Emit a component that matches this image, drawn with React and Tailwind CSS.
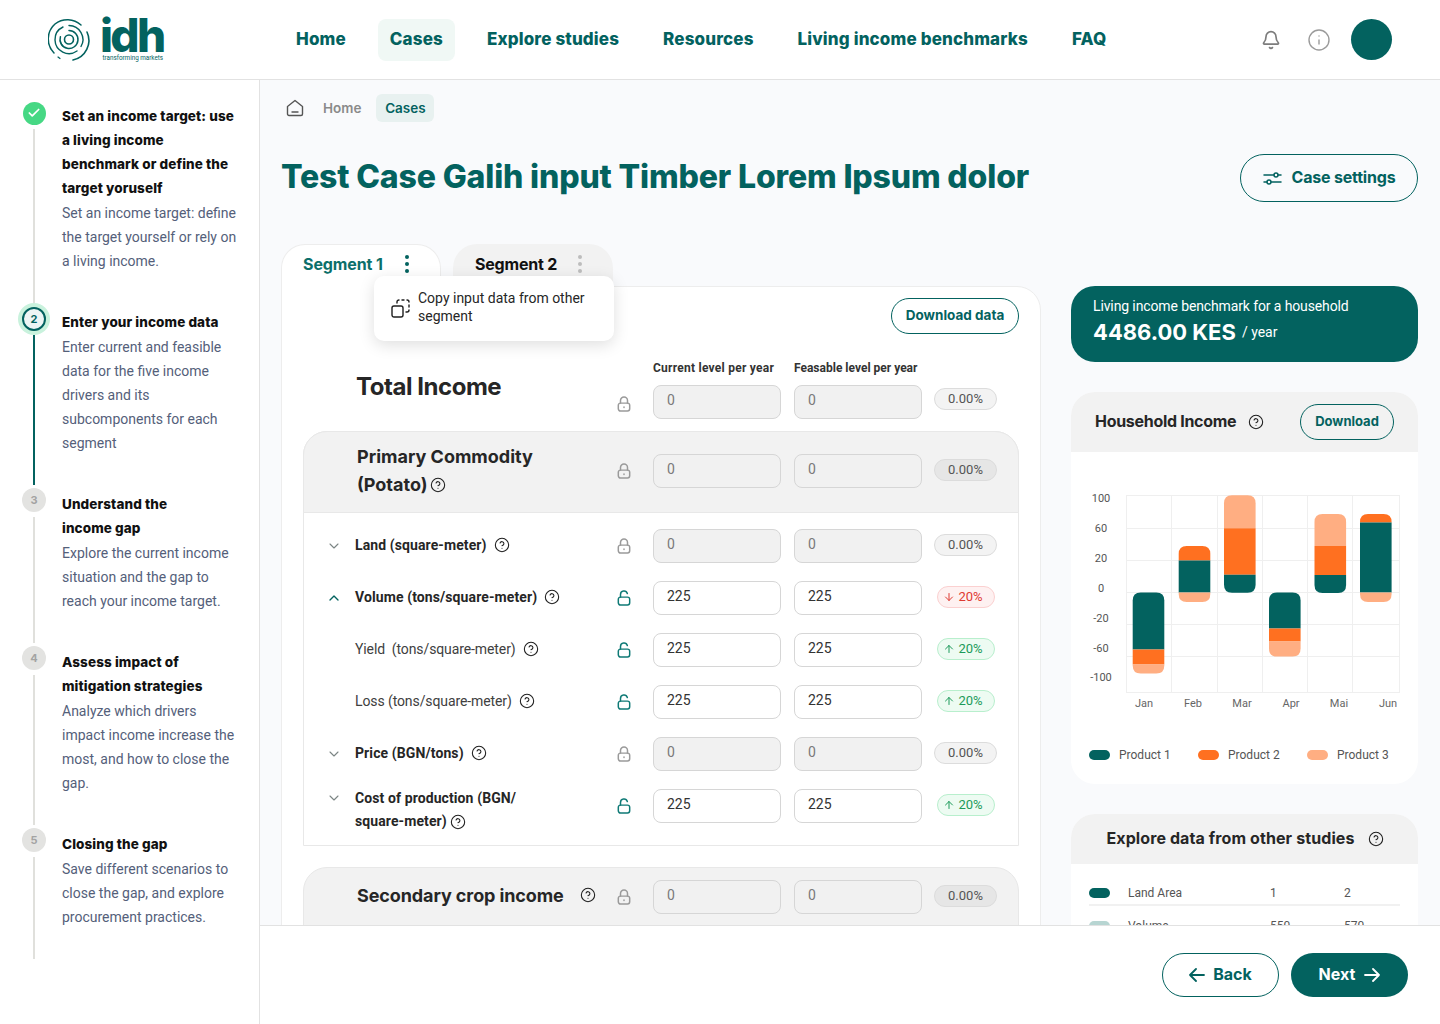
import { ArrowDown, ArrowUp, Bell, Check, ChevronDown, ChevronUp, CircleHelp, Info } from "lucide-react";

const navItems = [
  { label: "Home" },
  { label: "Cases", active: true },
  { label: "Explore studies" },
  { label: "Resources" },
  { label: "Living income benchmarks" },
  { label: "FAQ" },
];

const steps = [
  {
    status: "done",
    title: ["Set an income target: use", "a living income", "benchmark or define the", "target yoruself"],
    text: ["Set an income target: define", "the target yourself or rely on", "a living income."],
  },
  {
    status: "active",
    number: 2,
    title: ["Enter your income data"],
    text: ["Enter current and feasible", "data for the five income", "drivers and its", "subcomponents for each", "segment"],
  },
  {
    number: 3,
    title: ["Understand the", "income gap"],
    text: ["Explore the current income", "situation and the gap to", "reach your income target."],
  },
  {
    number: 4,
    title: ["Assess impact of", "mitigation strategies"],
    text: ["Analyze which drivers", "impact income increase the", "most, and how to close the", "gap."],
  },
  {
    number: 5,
    title: ["Closing the gap"],
    text: ["Save different scenarios to", "close the gap, and explore", "procurement practices."],
  },
];

const rows = [
  { label: "Land (square-meter)", chevron: "down", bold: true, value: "0", locked: true },
  { label: "Volume (tons/square-meter)", chevron: "up", bold: true, value: "225", change: "down" },
  { label: "Yield  (tons/square-meter)", value: "225", change: "up" },
  { label: "Loss (tons/square-meter)", value: "225", change: "up" },
  { label: "Price (BGN/tons)", chevron: "down", bold: true, value: "0", locked: true },
];

const bars = [
  {
    x: 1132.7,
    parts: [
      { y: 592.5, h: 57, color: "#03625f", round: "top" },
      { y: 649.5, h: 15, color: "#ff7020" },
      { y: 664.5, h: 9, color: "#ffae82", round: "bottom" },
    ],
  },
  {
    x: 1178.7,
    parts: [
      { y: 546, h: 14.5, color: "#ff7020", round: "top" },
      { y: 560.5, h: 32, color: "#03625f" },
      { y: 592.5, h: 9.5, color: "#ffae82", round: "bottom" },
    ],
  },
  {
    x: 1224,
    parts: [
      { y: 495.3, h: 33, color: "#ffae82", round: "top" },
      { y: 528.3, h: 46.5, color: "#ff7020" },
      { y: 574.8, h: 18, color: "#03625f", round: "bottom" },
    ],
  },
  {
    x: 1269,
    parts: [
      { y: 592.5, h: 36, color: "#03625f", round: "top" },
      { y: 628.5, h: 13, color: "#ff7020" },
      { y: 641.5, h: 15, color: "#ffae82", round: "bottom" },
    ],
  },
  {
    x: 1314.5,
    parts: [
      { y: 514, h: 32, color: "#ffae82", round: "top" },
      { y: 546, h: 29, color: "#ff7020" },
      { y: 575, h: 18, color: "#03625f", round: "bottom" },
    ],
  },
  {
    x: 1360,
    parts: [
      { y: 514, h: 8.5, color: "#ff7020", round: "top" },
      { y: 522.5, h: 70, color: "#03625f" },
      { y: 592.5, h: 9.5, color: "#ffae82", round: "bottom" },
    ],
  },
];

function barPath(x, part) {
  const w = 31.6;
  const r = 8;
  const { y, h, round } = part;
  if (round === "top") {
    return `M${x} ${y + h}V${y + r}Q${x} ${y} ${x + r} ${y}H${x + w - r}Q${x + w} ${y} ${x + w} ${y + r}V${y + h}Z`;
  }
  if (round === "bottom") {
    return `M${x} ${y}V${y + h - r}Q${x} ${y + h} ${x + r} ${y + h}H${x + w - r}Q${x + w} ${y + h} ${x + w} ${y + h - r}V${y}Z`;
  }
  return `M${x} ${y}H${x + w}V${y + h}H${x}Z`;
}

function Logo() {
  return (
    <div className="flex w-[284px] items-center pl-[48px]">
      <svg width="44" height="46" viewBox="0 0 44 46" fill="none" stroke="#03625f" strokeLinecap="round">
        <circle cx="21" cy="22.5" r="4.5" strokeWidth="1.6" />
        <path d="M21 13.5a9 9 0 1 1-8.6 6.3" strokeWidth="1.5" />
        <path d="M13 26a9.5 9.5 0 0 0 2 3" strokeWidth="1.2" />
        <path d="M21 8.5a14 14 0 0 1 12 21" strokeWidth="1.4" />
        <path d="M29 34a14 14 0 0 1-22-11 14 14 0 0 1 8-13" strokeWidth="1.4" />
        <path d="M33 8a20 20 0 0 0-26-1A20 20 0 0 0 6 36" strokeWidth="1.5" />
        <path d="M39 15a20 20 0 0 1-14 28" strokeWidth="1.6" />
        <path d="M10 40l2 1.5" strokeWidth="1.2" />
      </svg>
      <div className="ml-[8px] flex flex-col items-end">
        <span className="font-[Inter,sans-serif] text-[46px] leading-[36px] font-extrabold tracking-[-2.7px] text-[#03625f]">idh</span>
        <span className="mt-[2px] w-[61px] text-[6.3px] leading-[7px] whitespace-nowrap text-[#03625f]">transforming markets</span>
      </div>
    </div>
  );
}

function Header() {
  return (
    <header className="flex h-[80px] shrink-0 items-center border-b border-[#e2e2e2] bg-white pr-[48px]">
      <Logo />
      <nav className="flex items-center gap-[20px]">
        {navItems.map((item) => (
          <a
            key={item.label}
            className={`flex h-[42px] items-center rounded-[8px] px-[12px] font-[Inter,sans-serif] text-[17px] font-extrabold tracking-[0.15px] text-[#03625f] ${item.active ? "bg-[#f0f8f5]" : ""}`}
          >
            {item.label}
          </a>
        ))}
      </nav>
      <div className="ml-auto flex items-center">
        <Bell size={20} strokeWidth={2} className="text-[#7c7c7c]" />
        <Info size={24} strokeWidth={1.4} className="ml-[26px] text-[#9b9b9b]" />
        <div className="ml-[20px] h-[41px] w-[41px] rounded-full bg-[#03625f]"></div>
      </div>
    </header>
  );
}

function StepMarker({ step }) {
  if (step.status === "done") {
    return (
      <div className="flex h-[23px] w-[23px] items-center justify-center rounded-full bg-[#46d884]">
        <Check size={14} strokeWidth={3} className="text-white" />
      </div>
    );
  }
  if (step.status === "active") {
    return (
      <div className="flex h-[32px] w-[32px] items-center justify-center rounded-full bg-[#c9f2dd]">
        <div className="flex h-[24px] w-[24px] items-center justify-center rounded-full border-2 border-[#03625f] bg-[#edf5f4] font-[Inter,sans-serif] text-[11px] font-bold text-[#03625f]">
          {step.number}
        </div>
      </div>
    );
  }
  return (
    <div className="relative top-[-1px] flex h-[24px] w-[24px] items-center justify-center rounded-full bg-[#e3e3e1] font-[Inter,sans-serif] text-[11px] font-bold text-[#a3a3a3]">
      {step.number}
    </div>
  );
}

function Sidebar() {
  return (
    <aside className="w-[260px] shrink-0 border-r border-[#e2e2e2] bg-white pt-[24px]">
      {steps.map((step) => (
        <div key={step.number || step.status} className="flex pl-[18px]">
          <div className="mt-[-7px] mb-[7px] flex w-[32px] flex-col items-center">
            <div className="flex h-[32px] items-center justify-center">
              <StepMarker step={step} />
            </div>
            <div className={`w-[2px] flex-1 ${step.status === "active" ? "bg-[#03625f]" : "bg-[#e0e0dc]"}`}></div>
          </div>
          <div className="pb-[37px] pl-[12px] text-[14px] leading-[24px]">
            {step.title.map((line) => (
              <div key={line} className="font-[Inter,sans-serif] text-[13.5px] font-extrabold tracking-[0.1px] whitespace-nowrap text-[#111]">
                {line}
              </div>
            ))}
            <div className="mt-[1px]">
              {step.text.map((line) => (
                <div key={line} className="whitespace-nowrap text-[#54607a]">
                  {line}
                </div>
              ))}
            </div>
          </div>
        </div>
      ))}
    </aside>
  );
}

function HomeIcon() {
  return (
    <svg width="18" height="18" viewBox="0 0 18 18" fill="none" stroke="#555" strokeWidth="1.4" strokeLinejoin="round" strokeLinecap="round">
      <path d="M1.5 7.5 9 1.5l7.5 6v7.5a1.5 1.5 0 0 1-1.5 1.5H3A1.5 1.5 0 0 1 1.5 15z" />
      <path d="M6 13h6" />
    </svg>
  );
}

function SlidersIcon() {
  return (
    <svg width="19" height="15" viewBox="0 0 19 15" fill="none" stroke="#03625f" strokeWidth="1.5" strokeLinecap="round">
      <path d="M1 4h10M15 4h3M1 11h3M8 11h10" />
      <circle cx="13" cy="4" r="2" />
      <circle cx="6" cy="11" r="2" />
    </svg>
  );
}

function CopyIcon() {
  return (
    <svg width="19" height="19" viewBox="0 0 19 19" fill="none" stroke="#1f1f1f" strokeWidth="1.4" strokeLinecap="round" strokeLinejoin="round">
      <rect x="1" y="7" width="11" height="11" rx="2" />
      <path d="M6 4V3a2 2 0 0 1 2-2M11 1h2M16 1a2 2 0 0 1 2 2M18 6v2M18 11a2 2 0 0 1-2 2h-1" />
    </svg>
  );
}

function LockIcon({ open }) {
  const color = open ? "#0f7a76" : "#9a9a9a";
  return (
    <svg width="14" height="16" viewBox="0 0 16 18" fill="none" stroke={color} strokeWidth="1.7" strokeLinecap="round">
      <rect x="1.5" y="8" width="13" height="9" rx="2.5" />
      <path d={open ? "M4 8V5a4 4 0 0 1 7.8-1.2" : "M4 8V5a4 4 0 0 1 8 0v3"} />
      {!open && <path d="M8 12.5v.4" />}
    </svg>
  );
}

function Help() {
  return <CircleHelp size={16} strokeWidth={1.6} className="shrink-0 text-[#1f1f1f]" />;
}

function BackArrow() {
  return (
    <svg width="16" height="14" viewBox="0 0 16 14" fill="none" stroke="currentColor" strokeWidth="1.8" strokeLinecap="round" strokeLinejoin="round">
      <path d="M1 7h14M7 1 1 7l6 6" />
    </svg>
  );
}

function NextArrow() {
  return (
    <svg width="16" height="14" viewBox="0 0 16 14" fill="none" stroke="currentColor" strokeWidth="1.8" strokeLinecap="round" strokeLinejoin="round">
      <path d="M1 7h14M9 1l6 6-6 6" />
    </svg>
  );
}

function ValueInput({ value, locked }) {
  return (
    <div
      className={`flex h-[34px] w-[128px] items-center rounded-[8px] border pb-[4px] pl-[13px] text-[14px] ${
        locked ? "border-[#d6d6d6] bg-[#f1f1f1] text-[#7a7a7a]" : "border-[#d6d6d6] bg-white text-[#333]"
      }`}
    >
      {value}
    </div>
  );
}

function Chip({ change, shaded }) {
  if (change === "up") {
    return (
      <div className="flex h-[22px] w-[58px] items-center gap-[4px] rounded-full border border-[#b8efcd] bg-[#edfbf2] pl-[5px] text-[13px] text-[#1c9a5a]">
        <ArrowUp size={12} strokeWidth={2} />
        20%
      </div>
    );
  }
  if (change === "down") {
    return (
      <div className="flex h-[22px] w-[58px] items-center gap-[4px] rounded-full border border-[#fbd0d0] bg-[#fef1f1] pl-[5px] text-[13px] text-[#df3a32]">
        <ArrowDown size={12} strokeWidth={2} />
        20%
      </div>
    );
  }
  return (
    <div className={`flex h-[22px] w-[63px] items-center justify-center rounded-full border border-[#dcdcdc] text-[13px] text-[#555] ${shaded ? "bg-[#e6e6e6]" : "bg-[#f3f3f3]"}`}>
      0.00%
    </div>
  );
}

function Controls({ value, locked, change, shaded, total }) {
  return (
    <div className="flex shrink-0 items-center">
      <div className={`relative mr-[21px] flex w-[16px] justify-center ${total ? "top-[2px]" : "top-0"}`}>
        <LockIcon open={!locked} />
      </div>
      <ValueInput value={value} locked={locked} />
      <div className="ml-[13px]">
        <ValueInput value={value} locked={locked} />
      </div>
      <div className={`relative ml-[12px] flex w-[63px] justify-center ${total ? "top-[-3px]" : "top-[-1px]"}`}>
        <Chip change={change} shaded={shaded} />
      </div>
    </div>
  );
}

function IncomeRow({ row }) {
  return (
    <div className="flex h-[52px] items-center pr-[21px] pl-[22px]">
      <div className="w-[14px] shrink-0">
        {row.chevron === "down" && <ChevronDown size={16} strokeWidth={1.6} className="text-[#7c8584]" />}
        {row.chevron === "up" && <ChevronUp size={16} strokeWidth={2} className="text-[#03625f]" />}
      </div>
      <div className={`ml-[15px] flex flex-1 items-center gap-[7px] pb-[2px] text-[14px] whitespace-pre ${row.bold ? "font-bold tracking-[0.1px] text-[#262626]" : "tracking-[-0.1px] text-[#404040]"}`}>
        {row.label}
        <Help />
      </div>
      <Controls value={row.value} locked={row.locked} change={row.change} />
    </div>
  );
}

function SegmentTabs() {
  return (
    <div className="relative z-10 flex gap-[12px]">
      <div className="mb-[-1px] flex h-[43px] w-[160px] items-center rounded-t-[24px] border border-b-0 border-[#ededed] bg-white pb-[4px] pl-[21px] font-[Inter,sans-serif] text-[16px] font-bold tracking-[-0.1px] text-[#0c6f6a]">
        Segment 1
        <div className="ml-[22px] flex flex-col gap-[3px]">
          <span className="h-[4px] w-[4px] rounded-full bg-[#03625f]"></span>
          <span className="h-[4px] w-[4px] rounded-full bg-[#03625f]"></span>
          <span className="h-[4px] w-[4px] rounded-full bg-[#03625f]"></span>
        </div>
      </div>
      <div className="flex h-[42px] w-[160px] items-center rounded-t-[24px] bg-[#f2f2f2] pb-[2px] pl-[22px] font-[Inter,sans-serif] text-[16px] font-bold tracking-[-0.2px] text-[#111]">
        Segment 2
        <div className="ml-[21px] flex flex-col gap-[3px]">
          <span className="h-[4px] w-[4px] rounded-full bg-[#bdbdbd]"></span>
          <span className="h-[4px] w-[4px] rounded-full bg-[#bdbdbd]"></span>
          <span className="h-[4px] w-[4px] rounded-full bg-[#bdbdbd]"></span>
        </div>
      </div>
      <div className="absolute top-[32px] left-[93px] flex h-[65px] w-[240px] items-center rounded-[10px] bg-white pb-[4px] pl-[17px] text-[14px] leading-[18px] text-[#262626] shadow-[0_4px_16px_rgba(0,0,0,0.13)]">
        <div className="pt-[4px]">
          <CopyIcon />
        </div>
        <div className="ml-[8px]">
          Copy input data from other
          <br />
          segment
        </div>
      </div>
    </div>
  );
}

function IncomeCard() {
  return (
    <div className="w-[760px] shrink-0">
      <SegmentTabs />
      <div className="rounded-tr-[24px] border border-[#ededed] bg-white px-[21px] pt-[11px]">
        <div className="flex justify-end">
          <button className="h-[36px] w-[128px] rounded-full border border-[#03625f] pb-[2px] font-[Inter,sans-serif] text-[13.5px] font-bold text-[#03625f]">Download data</button>
        </div>
        <div className="mt-[26px] flex h-[16px] items-center pl-[350px] text-[12px] font-bold whitespace-nowrap text-[#333]">
          <div className="w-[141px] tracking-[0.25px]">Current level per year</div>
          <div>Feasable level per year</div>
        </div>
        <div className="mt-[9px] flex items-start pr-[22px] pl-[54px]">
          <h2 className="mt-[-13px] ml-[-1px] flex-1 font-[Inter,sans-serif] text-[24px] leading-[30px] font-bold tracking-[-0.45px] text-[#262626]">Total Income</h2>
          <Controls value="0" locked total />
        </div>
        <section className="mt-[12px] rounded-t-[24px] border border-[#e8e8e8]">
          <div className="-m-px flex h-[82px] items-center rounded-t-[24px] border border-[#e8e8e8] bg-[#f2f2f2] pr-[21px] pb-[2px] pl-[53px]">
            <div className="flex-1 font-[Inter,sans-serif] text-[18px] leading-[28px] font-bold text-[#262626]">
              Primary Commodity
              <div className="flex items-center gap-[3px]">
                (Potato)
                <Help />
              </div>
            </div>
            <Controls value="0" locked shaded />
          </div>
          <div className="pt-[8px] pb-[13px]">
            {rows.map((row) => (
              <IncomeRow key={row.label} row={row} />
            ))}
            <div className="flex h-[52px] items-center pr-[21px] pl-[22px]">
              <div className="mb-[16px] w-[14px] shrink-0">
                <ChevronDown size={16} strokeWidth={1.6} className="text-[#7c8584]" />
              </div>
              <div className="ml-[15px] flex-1 pt-[8px] text-[14px] leading-[23px] font-bold tracking-[0.1px] text-[#262626]">
                Cost of production (BGN/
                <div className="flex items-center gap-[3px]">
                  square-meter)
                  <Help />
                </div>
              </div>
              <Controls value="225" change="up" />
            </div>
          </div>
        </section>
        <section className="mt-[21px] h-[100px] rounded-t-[24px] border border-[#e8e8e8] bg-[#f2f2f2] pt-[12px]">
          <div className="flex items-center pr-[21px] pl-[53px]">
            <div className="flex flex-1 items-center gap-[16px] pb-[4px] font-[Inter,sans-serif] text-[18px] font-bold tracking-[-0.1px] text-[#262626]">
              Secondary crop income
              <Help />
            </div>
            <Controls value="0" locked shaded />
          </div>
        </section>
      </div>
    </div>
  );
}

function BarChart() {
  const gridY = [495.5, 528.5, 560.5, 592.5, 624.5, 656.5, 692.5];
  const gridX = [1126.5, 1171.5, 1217.5, 1262.5, 1307.5, 1352.5, 1399.5];
  const yLabels = [
    ["100", 498],
    ["60", 528],
    ["20", 558],
    ["0", 588],
    ["-20", 618],
    ["-60", 648],
    ["-100", 677],
  ];
  const xLabels = [
    ["Jan", 1144],
    ["Feb", 1193],
    ["Mar", 1242],
    ["Apr", 1291],
    ["Mai", 1339],
    ["Jun", 1388],
  ];
  return (
    <svg width="347" height="240" viewBox="1071 482 347 240" className="block">
      {gridY.map((y) => (
        <line key={y} x1="1126" x2="1400" y1={y} y2={y} stroke="#efefef" strokeWidth="1" />
      ))}
      {gridX.map((x) => (
        <line key={x} x1={x} x2={x} y1="495" y2="693" stroke="#efefef" strokeWidth="1" />
      ))}
      {bars.map((bar) =>
        bar.parts.map((part) => <path key={`${bar.x}-${part.y}`} d={barPath(bar.x, part)} fill={part.color} />),
      )}
      {yLabels.map(([label, y]) => (
        <text key={label} x="1101" y={y + 4} textAnchor="middle" fontSize="11" fill="#555">
          {label}
        </text>
      ))}
      {xLabels.map(([label, x]) => (
        <text key={label} x={x} y="707" textAnchor="middle" fontSize="11" fill="#666">
          {label}
        </text>
      ))}
    </svg>
  );
}

function LegendItem({ swatch, label }) {
  return (
    <div className="flex w-[109px] items-center gap-[9px] text-[12px] text-[#555]">
      <span className={`h-[10px] w-[21px] rounded-full ${swatch}`}></span>
      {label}
    </div>
  );
}

function SidePanel() {
  return (
    <div className="w-[347px] shrink-0 pt-[42px]">
      <div className="h-[76px] rounded-[24px] bg-[#03625f] pt-[12px] pl-[22px] text-white">
        <div className="text-[14px] leading-[17px] tracking-[-0.12px]">Living income benchmark for a household</div>
        <div className="mt-[3px] flex items-center gap-[6px]">
          <span className="font-[Inter,sans-serif] text-[22px] leading-[28px] font-bold">4486.00 KES</span>
          <span className="text-[14px]">/ year</span>
        </div>
      </div>
      <div className="mt-[30px] h-[392px] overflow-hidden rounded-[24px] bg-white">
        <div className="flex h-[60px] items-center bg-[#f2f2f2] pr-[24px] pl-[24px]">
          <span className="pb-[2px] font-[Inter,sans-serif] text-[16px] font-bold tracking-[-0.3px] text-[#262626]">Household Income</span>
          <div className="ml-[12px]">
            <Help />
          </div>
          <button className="ml-auto h-[36px] w-[94px] rounded-full border border-[#03625f] pb-[1px] font-[Inter,sans-serif] text-[13px] font-bold text-[#03625f]">Download</button>
        </div>
        <div className="pt-[30px]">
          <BarChart />
        </div>
        <div className="mt-[24px] flex pl-[18px]">
          <LegendItem swatch="bg-[#03625f]" label="Product 1" />
          <LegendItem swatch="bg-[#ff7020]" label="Product 2" />
          <LegendItem swatch="bg-[#ffae82]" label="Product 3" />
        </div>
      </div>
      <div className="mt-[30px] overflow-hidden rounded-t-[24px] bg-white">
        <div className="flex h-[50px] items-center justify-center gap-[13px] bg-[#f2f2f2] pl-[1px]">
          <span className="pb-[2px] font-[Inter,sans-serif] text-[16px] font-bold tracking-[0.1px] text-[#262626]">Explore data from other studies</span>
          <Help />
        </div>
        <div className="px-[18px] pt-[12px] text-[12px] text-[#555]">
          <div className="flex h-[30px] items-center border-b-2 border-[#f1f1f1] pt-[6px]">
            <span className="h-[10px] w-[21px] rounded-full bg-[#03625f]"></span>
            <span className="ml-[18px] w-[142px]">Land Area</span>
            <span className="w-[74px]">1</span>
            <span>2</span>
          </div>
          <div className="flex h-[40px] items-center">
            <span className="h-[10px] w-[21px] rounded-full bg-[#b7d5d2]"></span>
            <span className="ml-[18px] w-[142px]">Volume</span>
            <span className="w-[74px]">550</span>
            <span>570</span>
          </div>
        </div>
      </div>
    </div>
  );
}

function FooterBar() {
  return (
    <div className="absolute right-0 bottom-0 left-0 z-20 flex h-[99px] items-start justify-end gap-[12px] border-t border-[#e2e2e2] bg-white pt-[27px] pr-[32px]">
      <button className="flex h-[44px] w-[117px] items-center justify-center gap-[8px] rounded-full border border-[#03625f] font-[Inter,sans-serif] text-[16px] font-bold text-[#03625f]">
        <BackArrow />
        <span className="pb-[2px]">Back</span>
      </button>
      <button className="flex h-[44px] w-[117px] items-center justify-center gap-[9px] rounded-full bg-[#03625f] font-[Inter,sans-serif] text-[16px] font-bold text-white">
        <span className="pb-[2px]">Next</span>
        <NextArrow />
      </button>
    </div>
  );
}

export default function App() {
  return (
    <div className="flex h-[1024px] w-[1440px] flex-col overflow-hidden bg-white font-[Roboto,sans-serif]">
      <Header />
      <div className="flex min-h-0 flex-1">
        <Sidebar />
        <main className="relative min-w-0 flex-1 overflow-hidden bg-[#f9fafc] pr-[22px] pl-[21px]">
          <div className="mt-[14px] flex h-[28px] items-center pl-[5px]">
            <HomeIcon />
            <span className="ml-[19px] pt-[1px] font-[Inter,sans-serif] text-[13.5px] font-semibold text-[#8a8a8a]">Home</span>
            <span className="ml-[15px] flex h-[28px] w-[58px] items-center justify-center rounded-[6px] bg-[#e8f1f0] pt-[1px] font-[Inter,sans-serif] text-[13.5px] font-semibold text-[#03625f]">Cases</span>
          </div>
          <div className="mt-[32px] flex h-[48px] items-center justify-between">
            <h1 className="pb-[2px] font-[Inter,sans-serif] text-[32px] font-extrabold tracking-[-0.15px] whitespace-nowrap text-[#03625f]">Test Case Galih input Timber Lorem Ipsum dolor</h1>
            <button className="flex h-[48px] w-[178px] items-center justify-center gap-[10px] rounded-full border border-[#03625f] font-[Inter,sans-serif] text-[16px] font-bold tracking-[-0.2px] text-[#03625f]">
              <SlidersIcon />
              <span className="pb-[2px]">Case settings</span>
            </button>
          </div>
          <div className="mt-[42px] flex gap-[30px]">
            <IncomeCard />
            <SidePanel />
          </div>
          <FooterBar />
        </main>
      </div>
    </div>
  );
}
